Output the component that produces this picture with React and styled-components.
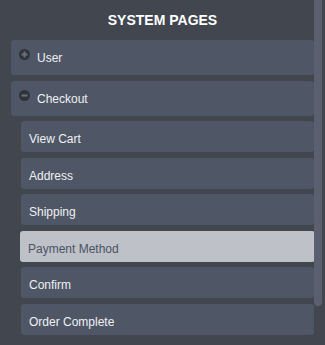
import { createGlobalStyle } from "styled-components";
import styled from "styled-components";

const checkoutSteps = [
  { name: "View Cart" },
  { name: "Address" },
  { name: "Shipping" },
  { name: "Payment Method", active: true },
  { name: "Confirm" },
  { name: "Order Complete" },
];

function ToggleIcon({ open }) {
  return (
    <IconBox>
      <svg width="11" height="11" viewBox="0 0 11 11">
        <circle cx="5.5" cy="5.5" r="5.5" fill="#2f333a" />
        <rect x="2.5" y="4.5" width="6" height="2" fill="#6a707a" />
        {!open && <rect x="4.5" y="2.5" width="2" height="6" fill="#6a707a" />}
      </svg>
    </IconBox>
  );
}

function App() {
  return (
    <>
      <GlobalStyle />
      <Sidebar>
        <Content>
          <Title>SYSTEM PAGES</Title>
          <GroupItem>
            <ToggleIcon />
            <Label>User</Label>
          </GroupItem>
          <GroupItem last>
            <ToggleIcon open />
            <Label>Checkout</Label>
          </GroupItem>
          <SubList>
            {checkoutSteps.map((step) => (
              <SubItem key={step.name} active={step.active}>
                {step.name}
              </SubItem>
            ))}
          </SubList>
        </Content>
        <ScrollTrack>
          <ScrollThumb />
        </ScrollTrack>
      </Sidebar>
    </>
  );
}

const GlobalStyle = createGlobalStyle`
  body {
    margin: 0;
    background: #41464f;
    font-family: "Liberation Sans", Arial, sans-serif;
  }
`;

const Sidebar = styled.div`
  display: flex;
  width: 325px;
  height: 345px;
  overflow: hidden;
  background: #41464f;
`;

const Content = styled.div`
  flex: 1;
  padding: 12px 0 0 11px;
`;

const Title = styled.h3`
  margin: 0 0 12px;
  font-size: 14px;
  line-height: 16px;
  font-weight: 700;
  text-align: center;
  color: #ffffff;
`;

const GroupItem = styled.div`
  display: flex;
  align-items: flex-start;
  height: 35px;
  box-sizing: border-box;
  padding: 9px 0 0 8px;
  margin-bottom: ${(p) => (p.last ? "5px" : "6px")};
  background: #4f5766;
  border-radius: 3px;
`;

const IconBox = styled.span`
  display: block;
  width: 11px;
  height: 11px;
  svg {
    display: block;
  }
`;

const Label = styled.span`
  margin: 2px 0 0 7px;
  font-size: 12px;
  line-height: 15px;
  color: #eef0f3;
`;

const SubList = styled.div`
  padding-left: 10px;
`;

const SubItem = styled.div`
  height: 31px;
  box-sizing: border-box;
  padding: 11px 8px 0;
  margin: ${(p) => (p.active ? "0 -1px 5.6px" : "0 0 5.6px")};
  font-size: 12px;
  line-height: 15px;
  border-radius: 3px;
  background: ${(p) => (p.active ? "#bec1c8" : "#4f5766")};
  color: ${(p) => (p.active ? "#4c5363" : "#eef0f3")};
`;

const ScrollTrack = styled.div`
  width: 11px;
  flex-shrink: 0;
`;

const ScrollThumb = styled.div`
  width: 8px;
  height: 306px;
  background: #5a6070;
  border-radius: 0 0 4px 4px;
`;

export default App;
